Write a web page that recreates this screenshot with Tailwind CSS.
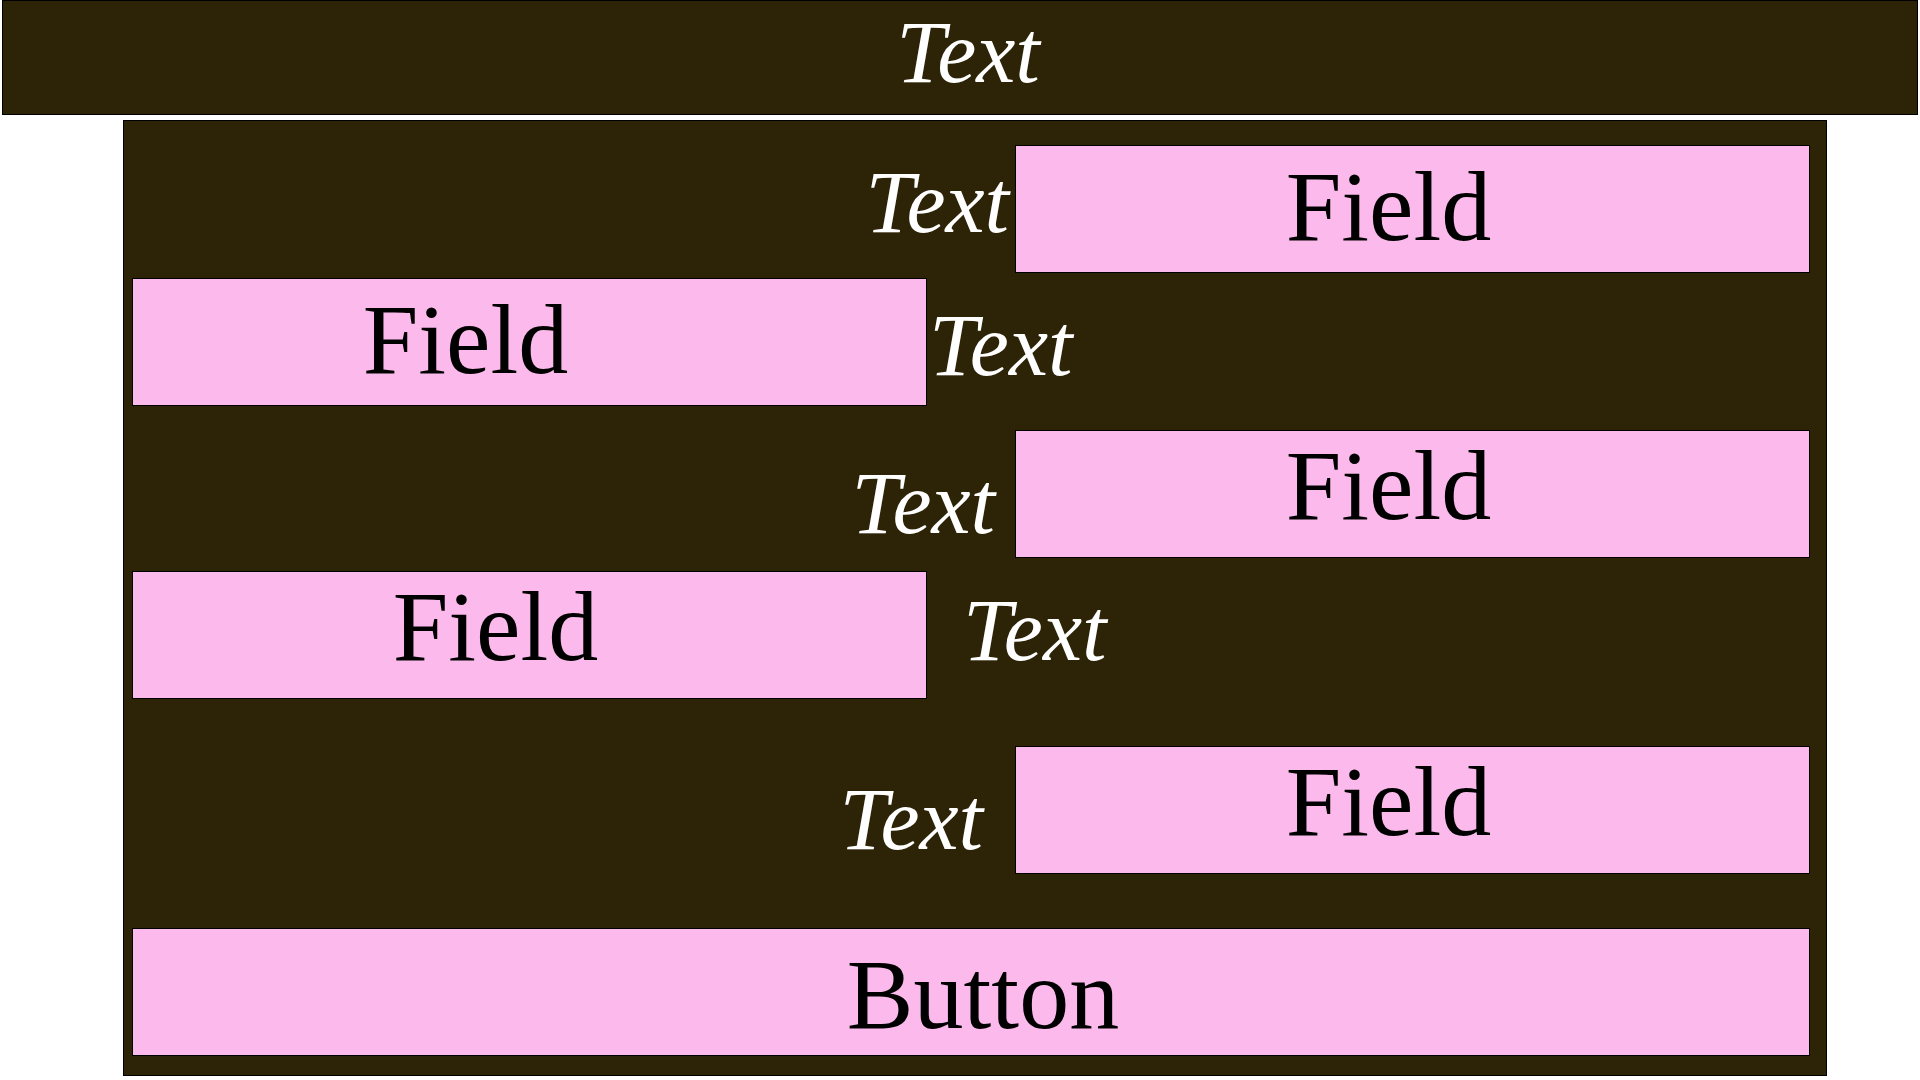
<!DOCTYPE html>
<html lang="en">
<head>
<meta charset="utf-8">
<meta name="viewport" content="width=device-width, initial-scale=1">
<title>Form</title>
<script src="https://cdn.jsdelivr.net/npm/@tailwindcss/browser@4"></script>
</head>
<body class="bg-white font-['Liberation_Serif',serif] text-black">
  <header class="mx-[2px] border border-black bg-[#2d2306] pt-2 pb-[17px] pl-4">
    <h1 class="text-center text-[88px] leading-none text-white italic">Text</h1>
  </header>

  <form class="mt-[5px] mr-[93px] ml-[123px] border border-black bg-[#2d2306] pt-6 pr-4 pb-[19px] pl-2">
    <div class="flex items-start">
      <label for="field-1" class="flex-1 pt-3.5 pr-1.5 text-right text-[88px] leading-none text-white italic">Text</label>
      <input id="field-1" type="text" value="Field" class="h-32 w-[calc(50%-44px)] border border-black bg-[#fbbaeb] pr-12 pb-1 text-center text-[100px]">
    </div>

    <div class="mt-[5px] flex flex-row-reverse items-start">
      <label for="field-2" class="flex-1 pt-6 pl-0.5 text-[88px] leading-none text-white italic">Text</label>
      <input id="field-2" type="text" value="Field" class="h-32 w-[calc(50%-44px)] border border-black bg-[#fbbaeb] pr-32 pb-1 text-center text-[100px]">
    </div>

    <div class="mt-6 flex items-start">
      <label for="field-3" class="flex-1 pt-7.5 pr-5 text-right text-[88px] leading-none text-white italic">Text</label>
      <input id="field-3" type="text" value="Field" class="h-32 w-[calc(50%-44px)] border border-black bg-[#fbbaeb] pr-12 pb-4 text-center text-[100px]">
    </div>

    <div class="mt-[13px] flex flex-row-reverse items-start">
      <label for="field-4" class="flex-1 pt-4 pl-9 text-[88px] leading-none text-white italic">Text</label>
      <input id="field-4" type="text" value="Field" class="h-32 w-[calc(50%-44px)] border border-black bg-[#fbbaeb] pr-17 pb-4 text-center text-[100px]">
    </div>

    <div class="mt-[47px] flex items-start">
      <label for="field-5" class="flex-1 pt-7.5 pr-8 text-right text-[88px] leading-none text-white italic">Text</label>
      <input id="field-5" type="text" value="Field" class="h-32 w-[calc(50%-44px)] border border-black bg-[#fbbaeb] pr-12 pb-4 text-center text-[100px]">
    </div>

    <button type="button" class="mt-[54px] block h-32 w-full border border-black bg-[#fbbaeb] pt-1.5 pl-6 text-center text-[100px] leading-none">Button</button>
  </form>
</body>
</html>
